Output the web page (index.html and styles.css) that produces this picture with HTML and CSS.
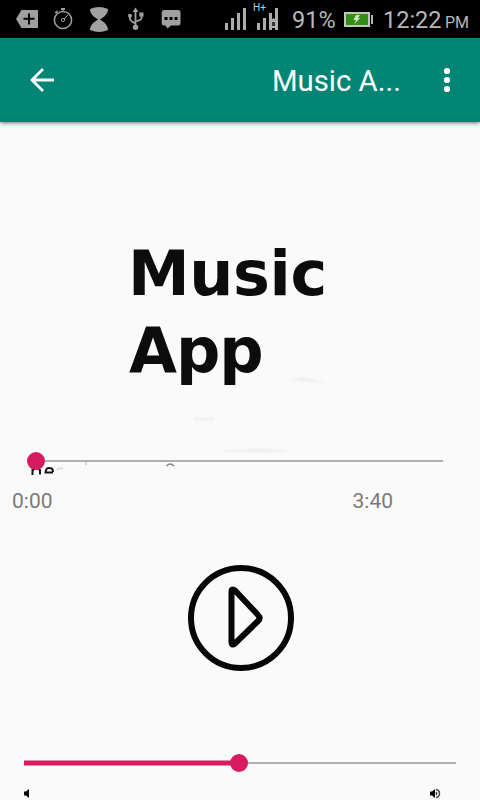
FILE: index.html
```
<!DOCTYPE html>
<html lang="en">
<head>
<meta charset="utf-8">
<title>Music App</title>
<link rel="stylesheet" href="styles.css">
</head>
<body>
<div class="status">
  <svg class="status-icons" width="200" height="38" viewBox="0 0 200 38" fill="#a0a0a0">
    <path d="M21.500 10H38V28H21.500L16 19Z"/>
    <path d="M29 13.500V24.500M23.500 18.800H34.500" stroke="#000" stroke-width="2"/>
    <g fill="none" stroke="#a0a0a0"><circle cx="63" cy="20" r="8.600" stroke-width="1.500"/><circle cx="63" cy="20" r="1.600"/><path d="M64 19L68 15M63 9V11.500"/></g>
    <path d="M61 8H65V10H61ZM54.500 12.500L57 10.500L58 12L56 13.500Z"/>
    <path d="M90 9Q99 5 108 9C108 14 104 17 100 19.500C104 22 108 25 108 30Q99 34 90 30C90 25 94 22 98 19.500C94 17 90 14 90 9Z"/>
    <g fill="none" stroke="#a0a0a0" stroke-width="1.800"><path d="M135.500 26V11M130 16V19Q130 21 135.500 23.500M141.500 15V18Q141.500 20 135.500 21.500"/></g>
    <path d="M135.500 7.500L138.500 12H132.500ZM139.300 12.500H143.500V16.500H139.300Z"/><circle cx="130" cy="15.800" r="2"/><circle cx="135.500" cy="27.300" r="2.700"/>
    <path d="M164 10H178Q180.500 10 180.500 12.500V23Q180.500 25.500 178 25.500H171L167.500 28.500L165.500 25.500H164Q161.700 25.500 161.700 23V12.500Q161.700 10 164 10Z"/>
    <path fill="#000" d="M164.500 17H167.500V20H164.500ZM169.500 17H172.500V20H169.500ZM174.500 17H177.500V20H174.500Z"/>
  </svg>
  <svg class="signal" width="58" height="38" viewBox="222 0 58 38" fill="#adadad">
    <path d="M225 23H228V30H225ZM231 18H234V30H231ZM237 13H240V30H237ZM243 8H246V30H243ZM257 23H260V30H257ZM263 18H266V30H263ZM269 13H272V30H269ZM275 8H278V30H275Z"/>
    <path d="M270 21L273.500 18L277 21V28H270Z"/><path d="M272 22H275V26H272Z" fill="#333"/>
    <text x="253" y="11" class="net">H+</text>
  </svg>
  <span class="percent">91%</span>
  <svg class="battery" width="30" height="38" viewBox="343 0 30 38">
    <path d="M345 13H369V26H345Z" fill="#328e17" stroke="#c0c7bb" stroke-width="2"/>
    <path d="M371 15H373V24H371Z" fill="#b5b5b5"/>
    <path d="M356 15H360L358 18H360L354.500 24L356 20H353.500Z" fill="#d5ddd0"/>
  </svg>
  <span class="clock">12:22</span><span class="pm">PM</span>
</div>
<header class="bar">
  <svg class="back" width="26" height="26" viewBox="29 67 26 26" fill="none" stroke="#fff" stroke-width="2.800"><path d="M54 80H32M43 69L32 80L43 91"/></svg>
  <h1 class="title">Music A...</h1>
  <svg class="more" width="8" height="28" viewBox="0 0 8 28" fill="#fff"><circle cx="4" cy="5" r="3.100"/><circle cx="4" cy="14" r="3.100"/><circle cx="4" cy="23" r="3.100"/></svg>
</header>
<main class="player">
  <h2 class="name">Music<br><span class="second">App</span></h2>
  <svg class="seek" width="480" height="110" viewBox="0 372 480 110">
    <defs><filter id="soft" x="-30%" y="-200%" width="160%" height="500%"><feGaussianBlur stdDeviation="1.200"/></filter></defs>
    <g fill="#ececec" filter="url(#soft)"><path d="M289 379L305 377.500L327 383L303 381ZM194 418H214V420H194ZM218 451Q262 447 294 451Q262 453 218 451Z"/></g>
    <path d="M36 461H443" stroke="#afafaf" stroke-width="2"/>
    <g fill="none" stroke="#151515" stroke-width="2"><path d="M32.500 475V468.500M32.500 471Q36 465.500 40 470V474.500M53 472.500H45.500Q46 467.500 49.500 468Q53 468 53 472"/><path d="M57 470Q60 467 63 469" stroke="#ddd"/><path d="M86 462V465" stroke="#bbb" stroke-width="1"/><path d="M166.500 466Q170 462 174 466" stroke="#888" stroke-width="1.500"/></g>
    <circle cx="36" cy="461" r="9" fill="#d81b60"/>
  </svg>
  <div class="times"><span>0:00</span><span>3:40</span></div>
  <svg class="play" width="110" height="110" viewBox="186 563 110 110" fill="none" stroke="#060606" stroke-width="6"><circle cx="241" cy="618" r="50"/><path d="M231.500 592V642Q231.500 646 235 643.500L258 621Q261 618 258 615L235 590.500Q231.500 588 231.500 592Z"/></svg>
  <svg class="volume" width="480" height="60" viewBox="0 740 480 60">
    <path d="M239 763H456" stroke="#afafaf" stroke-width="2"/>
    <path d="M24 763H239" stroke="#d81b60" stroke-width="5"/>
    <circle cx="239" cy="763" r="9" fill="#d81b60"/>
    <path d="M24 791.500H26L29 789V798L26 795.500H24ZM430 791.500H432L435 789V798L432 795.500H430Z" fill="#080808"/>
    <path d="M436 789.500Q439.500 790 439.500 793.500T436 797.500M436 792Q437.500 793.500 436 795" fill="none" stroke="#444" stroke-width="1.400"/>
  </svg>
</main>
</body>
</html>
```
FILE: styles.css
```
* { box-sizing: border-box; }
body {
  margin: 0;
  width: 480px;
  height: 800px;
  overflow: hidden;
  background: #fafafa;
  font-family: Roboto, "Liberation Sans", sans-serif;
}
svg { display: block; flex: none; }
.status {
  display: flex;
  height: 38px;
  background: #000;
  color: #b8b8b8;
  font-size: 23.5px;
  line-height: 40px;
  white-space: nowrap;
}
.signal { margin-left: 22px; }
.net { font-size: 10px; fill: #ccc; }
.percent { width: 51px; margin-left: 12px; }
.percent, .clock { flex: none; }
.clock { width: 60px; margin-left: 10px; }
.pm { font-size: 16px; line-height: 45px; margin-left: 2px; }
.bar {
  display: flex;
  align-items: center;
  height: 84px;
  padding: 0 29px;
  background: #038576;
  box-shadow: 0 1px 4px rgba(0, 0, 0, .55);
}
.title {
  width: 140px;
  margin: 2px 0 0 217px;
  color: #fff;
  font-size: 29.3px;
  font-weight: 400;
  line-height: 34px;
  white-space: nowrap;
}
.more { margin-left: 31px; }
.player { padding-top: 113px; }
.name {
  height: 137px;
  margin: 0 0 0 128px;
  color: #0c0c0c;
  font: bold 62px/77px "DejaVu Sans", sans-serif;
  letter-spacing: -.4px;
}
.second { margin-left: 1px; letter-spacing: -1px; }
.times {
  display: flex;
  justify-content: space-between;
  height: 81px;
  padding: 7px 87px 0 12px;
  color: #7a7a7a;
  font-size: 21px;
  line-height: 24px;
}
.play { margin: 0 0 67px 186px; }
```
